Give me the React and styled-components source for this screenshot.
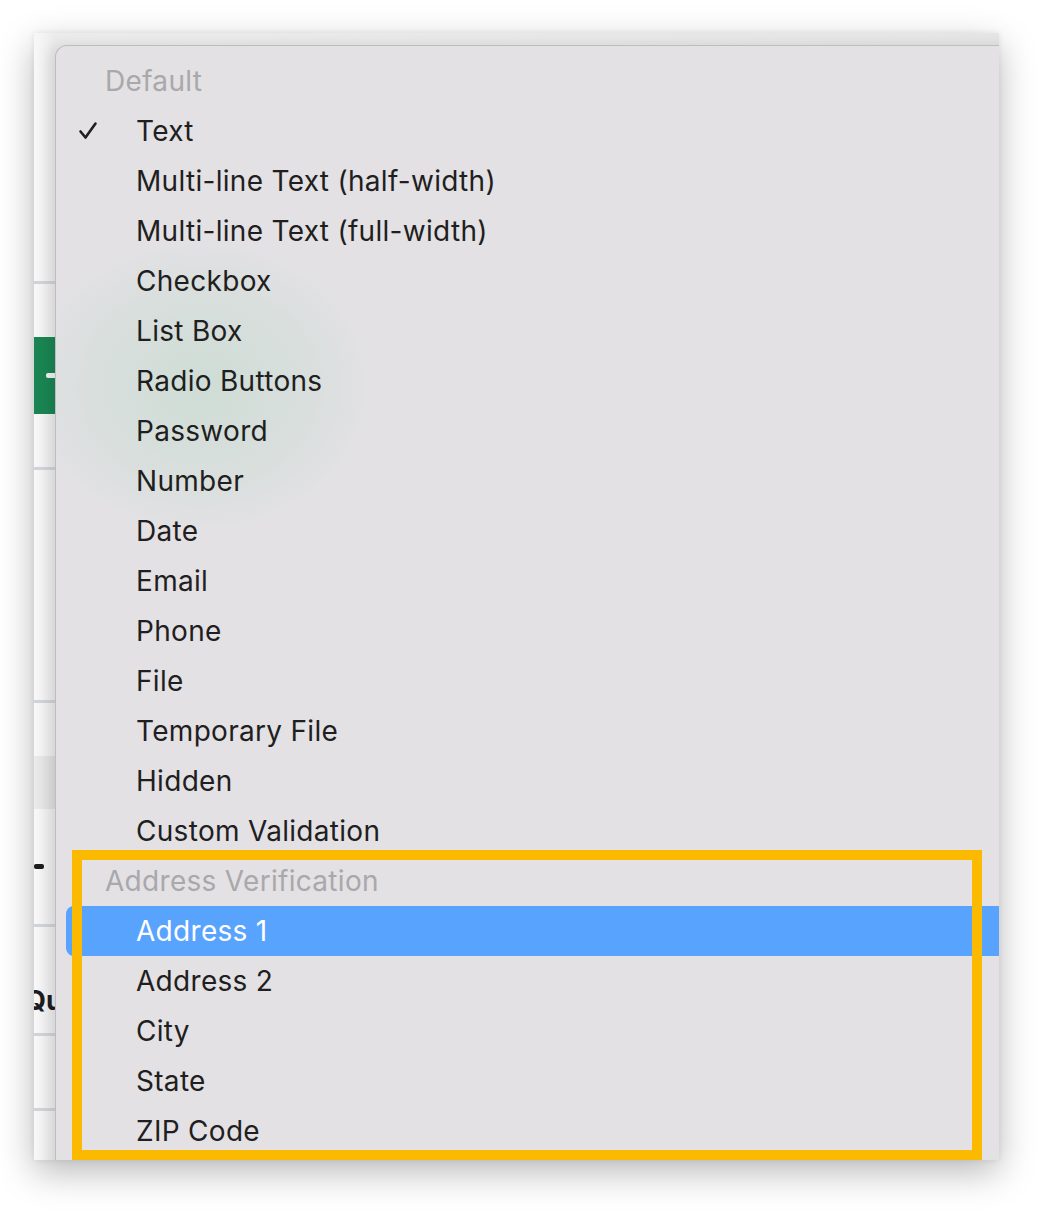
import React from 'react';
import styled, { createGlobalStyle } from 'styled-components';

const GlobalStyle = createGlobalStyle`
  html, body {
    margin: 0;
    padding: 0;
    background: #ffffff;
  }
  body {
    font-family: Inter, "Liberation Sans", sans-serif;
  }
`;

const Stage = styled.div`
  width: 1048px;
  height: 1212px;
  padding: 33px 0 0 34px;
  box-sizing: border-box;
`;

const Window = styled.div`
  position: relative;
  width: 965px;
  height: 1127px;
  overflow: hidden;
  background: #f4f4f4;
  box-shadow: 0 12px 34px rgba(0, 0, 0, 0.28), 0 0 6px rgba(0, 0, 0, 0.08);
`;

// pagina de fondo, solo se ve una franja a la izquierda
const BackPage = styled.div`
  display: flex;
  flex-direction: column;
  width: 100%;
  background: linear-gradient(90deg, #f8f8f8 0%, #ececec 20px, #e6e6e6 100%);
`;

const BackRow = styled.div`
  height: ${props => props.h}px;
  box-sizing: border-box;
  display: flex;
  align-items: ${props => props.align || 'center'};
  border-bottom: ${props => props.line ? '3px solid #d0d3d8' : 'none'};
  background: ${props => props.shade ? 'linear-gradient(90deg, #ebebeb, #dedede 20px)' : 'transparent'};
`;

const GreenButton = styled.div`
  width: 120px;
  height: 77px;
  background: #1a8552;
  display: flex;
  align-items: center;
  padding-left: 12px;
  box-sizing: border-box;
`;

const WhiteDash = styled.span`
  width: 12px;
  height: 5px;
  border-radius: 2px;
  background: #f2f2f2;
`;

const BlackDash = styled.span`
  width: 10px;
  height: 5px;
  border-radius: 2px;
  background: #1d1d1f;
`;

const BoldText = styled.span`
  font-family: Inter, "Liberation Sans", sans-serif;
  font-weight: 700;
  font-size: 27px;
  color: #1d1d1f;
  margin-left: -9px;
  padding-top: 40px;
`;

const Menu = styled.div`
  position: absolute;
  top: 12px;
  left: 21px;
  width: 980px;
  height: 1160px;
  box-sizing: border-box;
  padding-top: 10px;
  background: #e3e1e4;
  border: 1px solid rgba(0, 0, 0, 0.16);
  border-radius: 12px 0 0 0;
  box-shadow: -6px 0 14px rgba(0, 0, 0, 0.1);
  &::before {
    content: '';
    position: absolute;
    left: 0;
    top: 190px;
    width: 320px;
    height: 300px;
    background: radial-gradient(ellipse at 45% 50%, rgba(60, 190, 110, 0.12) 0%, rgba(60, 190, 110, 0.06) 45%, rgba(60, 190, 110, 0) 70%);
    pointer-events: none;
  }
`;

const MenuItem = styled.div`
  position: relative;
  height: 50px;
  display: flex;
  align-items: center;
  margin-left: 10px;
  padding-left: ${props => props.header ? '39px' : '70px'};
  border-radius: 8px 0 0 8px;
  font-size: 28px;
  letter-spacing: 0.3px;
  color: ${props => props.header ? '#a9a8aa' : props.active ? '#ffffff' : '#1f1e20'};
  background: ${props => props.active ? '#58a3fd' : 'transparent'};
`;

const Check = styled.svg`
  position: absolute;
  left: 12px;
  top: 15px;
  width: 20px;
  height: 20px;
`;

const Annotation = styled.div`
  position: absolute;
  left: 38px;
  top: 817px;
  width: 910px;
  height: 310px;
  box-sizing: border-box;
  border: 10px solid #fbb900;
  pointer-events: none;
`;

const groups = [
  {
    title: 'Default',
    items: [
      'Text',
      'Multi-line Text (half-width)',
      'Multi-line Text (full-width)',
      'Checkbox',
      'List Box',
      'Radio Buttons',
      'Password',
      'Number',
      'Date',
      'Email',
      'Phone',
      'File',
      'Temporary File',
      'Hidden',
      'Custom Validation',
    ],
  },
  {
    title: 'Address Verification',
    items: ['Address 1', 'Address 2', 'City', 'State', 'ZIP Code'],
  },
];

const checked = 'Text';
const highlighted = 'Address 1';

export default function App() {
  return (
    <>
      <GlobalStyle />
      <Stage>
        <Window>
          <BackPage>
            <BackRow h={251} line />
            <BackRow h={186} line>
              <GreenButton>
                <WhiteDash />
              </GreenButton>
            </BackRow>
            <BackRow h={233} line />
            <BackRow h={53} />
            <BackRow h={53} shade />
            <BackRow h={118} line>
              <BlackDash />
            </BackRow>
            <BackRow h={109} line>
              <BoldText>Qu</BoldText>
            </BackRow>
            <BackRow h={75} line />
            <BackRow h={49} />
          </BackPage>

          <Menu>
            {groups.map(group => (
              <React.Fragment key={group.title}>
                <MenuItem header>{group.title}</MenuItem>
                {group.items.map(item => (
                  <MenuItem key={item} active={item === highlighted}>
                    {item === checked && (
                      <Check viewBox="0 0 20 20">
                        <path d="M2.5 10.5 L7.5 16.5 L17.5 2.5" fill="none" stroke="#1f1e20" strokeWidth="2.6" strokeLinecap="round" strokeLinejoin="round" />
                      </Check>
                    )}
                    {item}
                  </MenuItem>
                ))}
              </React.Fragment>
            ))}
          </Menu>

          <Annotation />
        </Window>
      </Stage>
    </>
  );
}
